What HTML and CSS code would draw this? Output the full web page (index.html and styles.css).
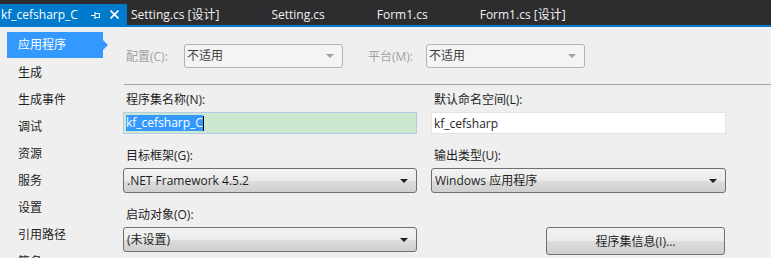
FILE: index.html
```html
<!DOCTYPE html>
<html lang="zh-CN">
<head>
  <meta charset="UTF-8" />
  <title>kf_cefsharp_C - 属性</title>
  <link rel="stylesheet" href="styles.css">
</head>
<body>

<div class="tabbar">
  <div class="tab active">
    <span class="tab-title">kf_cefsharp_C</span>
    <svg class="pin" width="9" height="8" viewBox="0 0 9 8">
      <path d="M0 4.5H4M4 1V8M4 2.5H8.5V6.5H4" fill="none" stroke="#fff" stroke-width="1"/>
    </svg>
    <svg class="close" width="9" height="9" viewBox="0 0 9 9">
      <path d="M0.5 0.5L8.5 8.5M8.5 0.5L0.5 8.5" stroke="#fff" stroke-width="1.6"/>
    </svg>
  </div>
  <div class="tab"><span class="tab-title">Setting.cs [设计]</span></div>
  <div class="tab"><span class="tab-title">Setting.cs</span></div>
  <div class="tab"><span class="tab-title">Form1.cs</span></div>
  <div class="tab"><span class="tab-title">Form1.cs [设计]</span></div>
</div>

<div class="main">
  <ul class="nav">
    <li class="selected">应用程序</li>
    <li>生成</li>
    <li>生成事件</li>
    <li>调试</li>
    <li>资源</li>
    <li>服务</li>
    <li>设置</li>
    <li>引用路径</li>
    <li>签名</li>
  </ul>

  <div class="content">
    <div class="config-row">
      <span class="cfg-label">配置(C):</span>
      <div class="combo disabled first">不适用<span class="arrow"></span></div>
      <span class="cfg-label">平台(M):</span>
      <div class="combo disabled">不适用<span class="arrow"></span></div>
    </div>

    <div class="separator"></div>

    <div class="form-grid">
      <div class="field">
        <label>程序集名称(N):</label>
        <div class="textbox edited"><span class="sel">kf_cefsharp_C</span><span class="caret"></span></div>
      </div>
      <div class="field">
        <label>默认命名空间(L):</label>
        <div class="textbox">kf_cefsharp</div>
      </div>
      <div class="field">
        <label>目标框架(G):</label>
        <div class="combo">.NET Framework 4.5.2<span class="arrow"></span></div>
      </div>
      <div class="field">
        <label>输出类型(U):</label>
        <div class="combo">Windows 应用程序<span class="arrow"></span></div>
      </div>
      <div class="field">
        <label>启动对象(O):</label>
        <div class="combo">(未设置)<span class="arrow"></span></div>
      </div>
      <div class="field buttons">
        <button class="btn">程序集信息(I)...</button>
      </div>
    </div>
  </div>
</div>

</body>
</html>
```

FILE: styles.css
```css
body {
  margin: 0;
  height: 258px;
  overflow: hidden;
  background: #efefef;
  font-family: "Open Sans", "Noto Sans CJK SC", sans-serif;
  font-size: 12px;
  color: #1e1e1e;
}

.tabbar {
  display: flex;
  height: 21px;
  padding-top: 4px;
  background: #2d2d30;
  border-bottom: 2px solid #007acc;
}

.tab {
  display: flex;
  align-items: center;
  height: 21px;
  padding: 0 48px 0 4px;
  color: #f1f1f1;
  white-space: nowrap;
}

.tab.active {
  width: 127px;
  box-sizing: border-box;
  padding: 0 0 0 1px;
  background: #007acc;
  color: #fff;
}

.tab-title {
  line-height: 21px;
}

.pin {
  margin-left: auto;
  margin-right: 10px;
}

.close {
  margin-right: 8px;
}

.main {
  display: flex;
}

.nav {
  list-style: none;
  margin: 0;
  padding: 5px 0 0 7px;
  width: 116px;
  flex: none;
}

.nav li {
  position: relative;
  width: 96px;
  height: 27px;
  line-height: 27px;
  padding-left: 11px;
  box-sizing: border-box;
}

.nav li.selected {
  height: 26px;
  line-height: 26px;
  margin-bottom: 1px;
  background: #3399ff;
  color: #fff;
}

.nav li.selected::after {
  content: "";
  position: absolute;
  right: -5px;
  top: 8px;
  border-left: 5px solid #3399ff;
  border-top: 5px solid transparent;
  border-bottom: 5px solid transparent;
}

.content {
  flex: 1;
  padding-top: 17px;
}

.config-row {
  display: flex;
  align-items: center;
  height: 24px;
}

.cfg-label {
  width: 61px;
  padding-left: 3px;
  box-sizing: border-box;
  color: #a2a4a5;
}

.combo {
  position: relative;
  height: 25px;
  line-height: 23px;
  padding-left: 3px;
  box-sizing: border-box;
  border: 1px solid #707070;
  border-radius: 3px;
  background: linear-gradient(#f2f2f2, #ebebeb 50%, #dddddd 51%, #cfcfcf);
  white-space: nowrap;
}

.combo .arrow {
  position: absolute;
  right: 8px;
  top: 10px;
  border-top: 4px solid #1e1e1e;
  border-left: 4px solid transparent;
  border-right: 4px solid transparent;
}

.combo.disabled {
  width: 159px;
  height: 24px;
  line-height: 22px;
  padding-left: 2px;
  border-color: #adb2b5;
  background: #f4f4f4;
  color: #3c3c3c;
}

.combo.disabled.first {
  margin-right: 22px;
}

.combo.disabled .arrow {
  top: 9px;
  border-top-color: #a0a0a0;
}

.separator {
  margin: 16px 0 7px 1px;
  height: 1px;
  background: #a0a0a0;
}

.form-grid {
  display: grid;
  grid-template-columns: 294px 295px;
  column-gap: 14px;
  row-gap: 14px;
}

.field label {
  display: block;
  height: 16px;
  line-height: 16px;
  margin-bottom: 4px;
  padding-left: 3px;
}

.textbox {
  display: flex;
  align-items: center;
  height: 22px;
  padding-left: 2px;
  box-sizing: border-box;
  border: 1px solid #e3e3e3;
  background: #fff;
}

.textbox.edited {
  border-color: #b4cde6;
  background: #cde8d0;
}

.sel {
  background: #3399ff;
  color: #fff;
  line-height: 16px;
}

.caret {
  width: 1px;
  height: 15px;
  background: #000;
}

.buttons {
  display: flex;
  justify-content: flex-end;
  padding-top: 20px;
}

.btn {
  width: 179px;
  height: 28px;
  margin-right: 1px;
  border: 1px solid #707070;
  border-radius: 3px;
  background: linear-gradient(#f2f2f2, #ebebeb 50%, #dddddd 51%, #cfcfcf);
  font-family: inherit;
  font-size: 12px;
  color: #1e1e1e;
}
```
